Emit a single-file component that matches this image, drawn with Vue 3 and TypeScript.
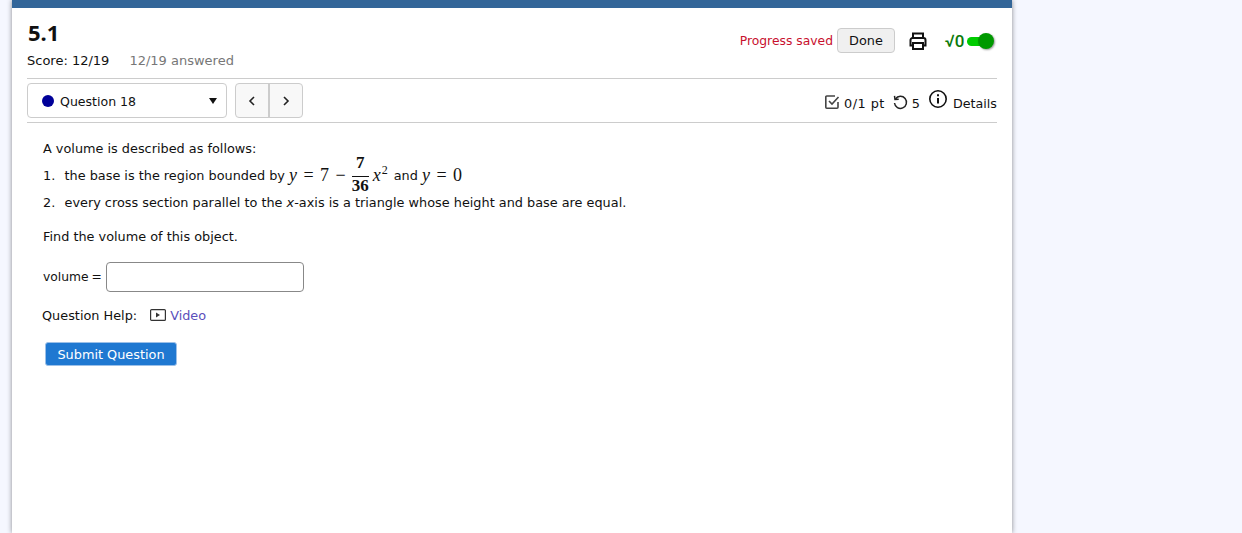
<script setup lang="ts">
const title: string = '5.1'
</script>

<template>
  <div class="page">
    <main class="card">
      <header class="head">
        <div class="head-left">
          <h1>{{ title }}</h1>
          <div class="score"><span>Score: 12/19</span><span class="answered">12/19 answered</span></div>
        </div>
        <div class="head-right">
          <span class="saved">Progress saved</span>
          <button class="done">Done</button>
          <svg class="printer" width="18" height="18" viewBox="1 1 18 18" fill="none" stroke="#111" stroke-width="2">
            <path d="M5 7V2.500h10V7" />
            <path d="M5 14.500H2.500V9a2 2 0 0 1 2-2h11a2 2 0 0 1 2 2v5.500H15" />
            <path d="M5 12h10v6H5z" />
          </svg>
          <span class="sqrt">√0</span>
          <span class="toggle"><i class="track"></i><i class="knob"></i></span>
        </div>
      </header>
      <nav class="nav">
        <div class="select"><i class="dot"></i><span class="qname">Question 18</span><i class="caret"></i></div>
        <div class="pager">
          <button class="pg"><svg width="8" height="12" viewBox="0 0 8 12" fill="none" stroke="#222" stroke-width="1.600"><path d="M6 2 2 6l4 4" /></svg></button>
          <button class="pg"><svg width="8" height="12" viewBox="0 0 8 12" fill="none" stroke="#222" stroke-width="1.600"><path d="m2 2 4 4-4 4" /></svg></button>
        </div>
        <div class="meta">
          <svg width="16" height="16" viewBox="0 0 16 16" fill="none" stroke="#444" stroke-width="1.600"><path d="M14 8v5.200a1 1 0 0 1-1 1H2.800a1 1 0 0 1-1-1V3a1 1 0 0 1 1-1H11" /><path d="m5 7 3 3 6.500-7" /></svg>
          <span class="pt">0/1 pt</span>
          <svg class="retry" width="16" height="16" viewBox="0 0 16 16" fill="none" stroke="#222" stroke-width="1.500"><path d="M3.500 5A6 6 0 1 1 2.500 9" /><path d="M2.500 1.800 3 5.500l3.700-.3" /></svg>
          <span class="tries">5</span>
          <svg class="info" width="20" height="20" viewBox="0 0 20 20" fill="none" stroke="#111" stroke-width="1.600"><circle cx="10" cy="10" r="8.200" /><path d="M10 9v5.500" stroke-width="2" /><path d="M10 5.200v2" stroke-width="2" /></svg>
          <span class="details">Details</span>
        </div>
      </nav>
      <section class="question">
        <p class="intro">A volume is described as follows:</p>
        <div class="item first">
          <span class="n">1.</span>
          <span>the base is the region bounded by</span>
          <span class="math"><i>y</i> = 7 −</span>
          <span class="frac"><span class="num">7</span><span class="den">36</span></span>
          <span class="math xsq"><i>x</i><sup>2</sup></span>
          <span>and</span>
          <span class="math"><i>y</i> = 0</span>
        </div>
        <div class="item second">
          <span class="n">2.</span>
          <span>every cross section parallel to the <em>x</em>-axis is a triangle whose height and base are equal.</span>
        </div>
        <p class="find">Find the volume of this object.</p>
        <div class="answer">
          <label for="vol">volume =</label>
          <input id="vol" type="text" />
        </div>
        <div class="help">
          <span>Question Help:</span>
          <svg width="16" height="12" viewBox="0 0 16 12" fill="none" stroke="#333" stroke-width="1.200"><rect x="0.600" y="0.600" width="14.800" height="10.800" rx="1" /><path d="M6 3.500v5l4-2.500z" fill="#333" stroke="none" /></svg>
          <a class="video">Video</a>
        </div>
        <button class="submit">Submit Question</button>
      </section>
    </main>
  </div>
</template>

<style>
html, body { margin: 0; background: #f5f7ff; }
</style>

<style scoped>
.page {
  height: 533px;
  overflow: hidden;
  padding-left: 12px;
  font-family: "DejaVu Sans", sans-serif;
  font-size: 12.850px;
  color: #111;
}
.card {
  box-sizing: border-box;
  width: 1000px;
  height: 533px;
  background: #fff;
  border-top: 8px solid #336699;
  padding: 0 15px;
  box-shadow: 0 0 5px rgba(0, 0, 0, 0.45);
}
.head { display: flex; justify-content: space-between; height: 70px; border-bottom: 1px solid #ccc; }
h1 { margin: 12px 0 0 1px; font-family: "Noto Sans", sans-serif; font-size: 22px; line-height: 24px; font-weight: 700; }
.score { margin-top: 9px; line-height: 16px; display: flex; gap: 20px; font-size: 13px; }
.answered { color: #777; }
.head-right { display: flex; align-items: center; height: 26px; margin-top: 19.500px; }
.saved { color: #c8102e; font-size: 12.350px; }
.done {
  margin-left: 4px;
  width: 58px;
  height: 25px;
  border: 1px solid #ccc;
  border-radius: 4px;
  background: #f0f0f0;
  font: inherit;
  color: #111;
  padding: 0;
}
.printer { margin-left: 14px; }
.sqrt { margin-left: 18px; width: 19px; color: #0a7a0a; font-family: "Roboto", sans-serif; font-size: 17px; font-weight: 500; white-space: nowrap; }
.toggle { position: relative; width: 28px; height: 18px; margin-left: 3px; margin-right: 2px; }
.track { position: absolute; left: 0; top: 5px; width: 24px; height: 9px; background: #00cc00; border-radius: 5px; }
.knob { position: absolute; right: 1px; top: 1px; width: 16px; height: 16px; border-radius: 50%; background: #009900; box-shadow: 1px 1px 2px rgba(0,0,0,.4); }
.nav { display: flex; align-items: center; height: 43px; border-bottom: 1px solid #ccc; }
.select {
  box-sizing: border-box;
  display: flex;
  align-items: center;
  width: 200px;
  height: 35px;
  border: 1px solid #ccc;
  border-radius: 4px;
  padding: 0 9px 0 14px;
}
.dot { width: 12px; height: 12px; border-radius: 50%; background: #000099; margin-right: 6px; }
.qname { flex: 1; font-size: 12.550px; padding-top: 1px; }
.caret { width: 0; height: 0; border-left: 4.500px solid transparent; border-right: 4.500px solid transparent; border-top: 6px solid #111; }
.pager { display: flex; margin-left: 8px; border: 1px solid #ccc; border-radius: 4px; height: 33px; background: #f8f8f8; }
.pg { width: 32px; padding: 0; border: 0; background: none; display: flex; align-items: center; justify-content: center; }
.pg + .pg { width: 34px; border-left: 2px solid #ccc; }
.meta { margin-left: auto; display: flex; align-items: center; padding-top: 5px; }
.meta svg { margin-top: -2px; }
.pt { margin-left: 4px; letter-spacing: 0.470px; }
.retry { margin-left: 7px; }
.tries { margin-left: 4px; }
.meta .info { margin-left: 8px; margin-right: 5px; margin-top: -8px; }
.details { font-size: 12.700px; }
.question { padding: 0 1px; }
.intro { margin: 18px 0 0 15px; line-height: 16px; }
.item { display: flex; align-items: center; margin-left: 15px; gap: 4px; white-space: pre; }
.n { width: 17.500px; }
.first { height: 38px; margin-top: -1px; }
.second { height: 16px; margin-top: 0; }
.math { font-family: "Liberation Serif", serif; font-size: 18px; word-spacing: 2px; }
.math i { font-style: italic; }
.math sup { font-size: 12px; line-height: 0; margin-left: 1px; margin-right: 2px; }
.frac { display: inline-flex; flex-direction: column; align-items: center; font-family: "Liberation Serif", serif; font-size: 17px; font-weight: 700; margin-left: 2px; }
.num { display: block; width: 100%; text-align: center; border-bottom: 1px solid #111; line-height: 16px; padding-bottom: 5px; }
.den { line-height: 18px; }
.find { margin: 19px 0 0 15px; line-height: 16px; }
.answer { display: flex; align-items: center; margin: 17px 0 0 15px; gap: 3px; }
label { width: 60px; font-size: 12.300px; white-space: nowrap; word-spacing: -1px; }
input { box-sizing: border-box; width: 198px; height: 30px; border: 1px solid #888; border-radius: 4px; padding: 0; }
.help { display: flex; align-items: center; margin: 15px 0 0 14px; height: 16px; }
.help svg { margin-left: 13px; margin-right: 4px; }
.video { color: #5b4fbb; }
.submit {
  display: block;
  margin: 19px 0 0 17px;
  width: 132px;
  height: 24px;
  padding: 0;
  border: 1px solid #9cc0e8;
  border-radius: 3px;
  background: #1f78d1;
  color: #fff;
  font: inherit;
}
</style>
